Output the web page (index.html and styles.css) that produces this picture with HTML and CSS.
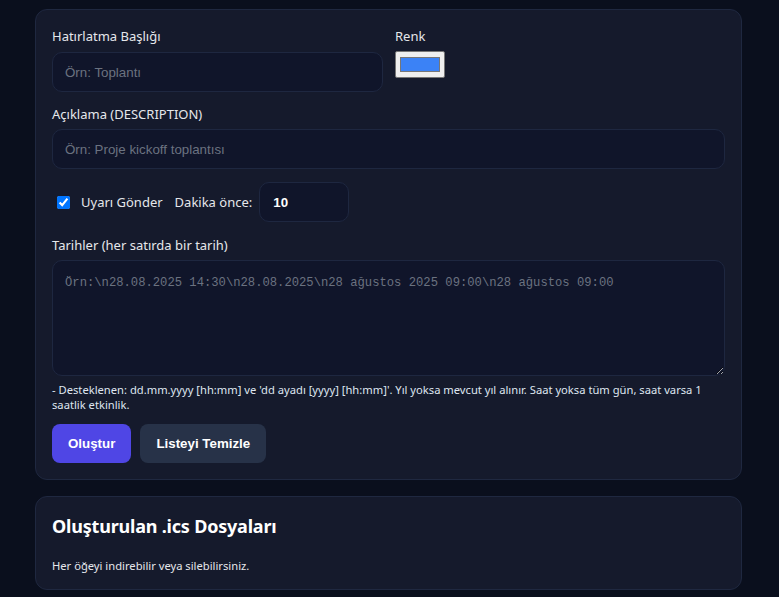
FILE: index.html
```html
<!DOCTYPE html>
<html lang="tr">
<head>
<meta charset="utf-8">
<title>Hatırlatma</title>
<link rel="stylesheet" href="styles.css">
</head>
<body>
<div class="container">
  <section class="card">
    <div class="row-top">
      <div class="field grow">
        <label class="label">Hatırlatma Başlığı</label>
        <input class="input" type="text" placeholder="Örn: Toplantı">
      </div>
      <div class="field">
        <label class="label">Renk</label>
        <input class="color" type="color" value="#3b82f6">
      </div>
    </div>
    <div class="field spaced">
      <label class="label">Açıklama (DESCRIPTION)</label>
      <input class="input" type="text" placeholder="Örn: Proje kickoff toplantısı">
    </div>
    <div class="alarm-row">
      <label class="check"><input type="checkbox" checked><span>Uyarı Gönder</span></label>
      <span class="minutes-label">Dakika önce:</span>
      <input class="input num" type="text" value="10">
    </div>
    <div class="field dates">
      <label class="label">Tarihler (her satırda bir tarih)</label>
      <textarea class="textarea" placeholder="Örn:\n28.08.2025 14:30\n28.08.2025\n28 ağustos 2025 09:00\n28 ağustos 09:00"></textarea>
      <p class="hint">- Desteklenen: dd.mm.yyyy [hh:mm] ve 'dd ayadı [yyyy] [hh:mm]'. Yıl yoksa mevcut yıl alınır. Saat yoksa tüm gün, saat varsa 1 saatlik etkinlik.</p>
    </div>
    <div class="actions">
      <button class="btn primary">Oluştur</button>
      <button class="btn secondary">Listeyi Temizle</button>
    </div>
  </section>
  <section class="card list-card">
    <h2 class="title">Oluşturulan .ics Dosyaları</h2>
    <p class="sub">Her öğeyi indirebilir veya silebilirsiniz.</p>
  </section>
</div>
</body>
</html>
```
FILE: styles.css
```css
* { box-sizing: border-box; }
html, body { margin: 0; padding: 0; }
body {
  background: #0a0f1d;
  color: #e5e7eb;
  font-family: "Noto Sans", "Open Sans", sans-serif;
  font-size: 13px;
}
.container {
  width: 707px;
  margin: 0 0 0 35px;
  padding-top: 9px;
  display: flex;
  flex-direction: column;
  gap: 16px;
}
.card {
  background: #151a2c;
  border: 1px solid #1f2840;
  border-radius: 12px;
  padding: 16px 16px 16px;
  display: flex;
  flex-direction: column;
}
.row-top {
  display: flex;
  gap: 12px;
}
.field { display: flex; flex-direction: column; }
.grow { width: 331px; }
.spaced { margin-top: 12px; }
.label {
  font-size: 13px;
  line-height: 20px;
  color: #e5e7eb;
  margin-bottom: 6px;
}
.spaced .label, .dates .label { margin-bottom: 5px; }
.input {
  height: 40px;
  background: #10152a;
  border: 1px solid #1e2740;
  border-radius: 10px;
  padding: 0 12px;
  color: #fff;
  font-family: "Liberation Sans", Arial, sans-serif;
  font-size: 13.33px;
  outline: none;
}
.input::placeholder { color: #6b7280; }
.color {
  width: 50px;
  height: 27px;
  margin: -1px 0 0;
  background: #efefef;
  border: 1px solid #767676;
  border-radius: 2px;
  padding: 1px 2px;
}
.alarm-row {
  display: flex;
  align-items: center;
  margin-top: 13px;
}
.check {
  display: flex;
  align-items: center;
  font-size: 13px;
}
.check input {
  width: 13px;
  height: 13px;
  margin: 0 11px 0 5px;
  accent-color: #0075ff;
}
.minutes-label { margin-left: 12px; margin-right: 7px; }
.num {
  width: 90px;
  font-weight: 700;
  color: #fff;
  padding-left: 13px;
}
.dates { margin-top: 13px; }
.textarea {
  height: 116px;
  background: #10152a;
  border: 1px solid #1e2740;
  border-radius: 10px;
  padding: 14px 12px 12px;
  font-family: "Liberation Mono", monospace;
  font-size: 12.2px;
  line-height: 16px;
  color: #fff;
  resize: vertical;
  outline: none;
}
.textarea::placeholder { color: #6b7280; }
.hint {
  margin: 6px 0 0;
  font-size: 11.2px;
  line-height: 15px;
  color: #dfe6f0;
}
.actions {
  display: flex;
  gap: 9px;
  margin-top: 12px;
}
.btn {
  height: 39px;
  border: none;
  border-radius: 8px;
  padding: 0 16px;
  color: #fff;
  font-family: "Liberation Sans", Arial, sans-serif;
  font-weight: 700;
  font-size: 13.33px;
}
.primary { background: #4f46e5; }
.secondary { background: #273248; }
.list-card { padding-top: 17px; padding-bottom: 16px; }
.title {
  margin: 0;
  font-size: 18px;
  letter-spacing: -0.2px;
  line-height: 25px;
  color: #fff;
  font-weight: 700;
}
.sub {
  margin: 19px 0 0;
  font-size: 11.2px;
  line-height: 15px;
  color: #e5e7eb;
}
```
